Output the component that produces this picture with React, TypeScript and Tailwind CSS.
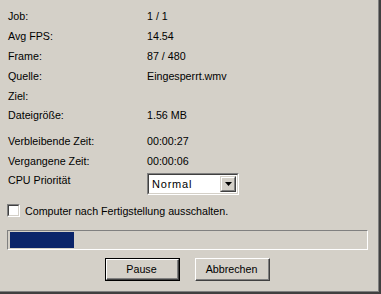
import React from "react";

const rows1: [string, string][] = [
  ["Job:", "1 / 1"],
  ["Avg FPS:", "14.54"],
  ["Frame:", "87 / 480"],
  ["Quelle:", "Eingesperrt.wmv"],
  ["Ziel:", ""],
  ["Dateigröße:", "1.56 MB"],
];

const rows2: [string, string][] = [
  ["Verbleibende Zeit:", "00:00:27"],
  ["Vergangene Zeit:", "00:00:06"],
];

function Row({ label, value }: { label: string; value: string }) {
  return (
    <div className="flex h-[19.8px] items-center">
      <div className="w-[139px]">{label}</div>
      <div>{value}</div>
    </div>
  );
}

function Btn({ label, def }: { label: string; def?: boolean }) {
  return (
    <div className={def ? "border border-black" : ""}>
      <div
        className={
          "border-t border-l border-white border-r border-b border-r-[#404040] border-b-[#404040] " +
          (def ? "w-[73px] h-[21px]" : "w-[75px] h-[23px]")
        }
      >
        <div className="h-full w-full border-r border-b border-r-[#808080] border-b-[#808080] flex items-center justify-center">
          {label}
        </div>
      </div>
    </div>
  );
}

export default function App() {
  return (
    <div
      className="w-[381px] h-[294px] bg-[#d4d0c8] text-black text-[10.7px] leading-[13px] border-r-2 border-b-2 border-[#404040] overflow-hidden"
      style={{ fontFamily: "Tahoma, 'Liberation Sans', Arial, sans-serif" }}
    >
      <div className="h-full w-full border-r border-b border-[#808080] flex flex-col">
        <div className="pl-[8px] pt-[7px]">
          {rows1.map(([l, v]) => (
            <Row key={l} label={l} value={v} />
          ))}
          <div className="h-[6px]" />
          {rows2.map(([l, v]) => (
            <Row key={l} label={l} value={v} />
          ))}
          <div className="flex h-[22px] mt-[1px]">
            <div className="w-[139px] pt-[2px]">CPU Priorität</div>
            <div className="mt-[1px] w-[92px] h-[22px] border-t border-l border-[#808080] border-r border-b border-r-white border-b-white">
              <div className="h-full w-full border-t border-l border-[#404040] border-r border-b border-r-[#d4d0c8] border-b-[#d4d0c8] bg-white flex items-center">
                <div className="flex-1 pl-[3px] pt-[1px] text-[11px] tracking-[0.8px]">Normal</div>
                <div className="w-[16px] h-[16px] bg-[#d4d0c8] border-t border-l border-[#d4d0c8] border-r border-b border-r-[#404040] border-b-[#404040] mr-[1px]">
                  <div className="h-full w-full border-t border-l border-white border-r border-b border-r-[#808080] border-b-[#808080] flex items-center justify-center">
                    <svg width="7" height="4" viewBox="0 0 7 4">
                      <path d="M0 0h7L3.5 4z" fill="black" />
                    </svg>
                  </div>
                </div>
              </div>
            </div>
          </div>
        </div>

        <div className="flex items-center pl-[7px] mt-[10px] h-[13px]">
          <div className="w-[13px] h-[13px] border-t border-l border-[#808080] border-r border-b border-r-white border-b-white">
            <div className="w-full h-full border-t border-l border-[#404040] border-r border-b border-r-[#d4d0c8] border-b-[#d4d0c8] bg-white" />
          </div>
          <div className="ml-[5px] pt-[1px]">Computer nach Fertigstellung ausschalten.</div>
        </div>

        <div className="ml-[7px] mt-[13px] w-[361px] h-[20px] border-t border-l border-[#808080] border-r border-b border-r-white border-b-white pt-[1px] pl-[2px]">
          <div className="w-[64px] h-[16px] bg-[#0a246a]" />
        </div>

        <div className="flex justify-center gap-[15px] mt-[8px] pr-[4px]">
          <Btn label="Pause" def />
          <Btn label="Abbrechen" />
        </div>
      </div>
    </div>
  );
}
